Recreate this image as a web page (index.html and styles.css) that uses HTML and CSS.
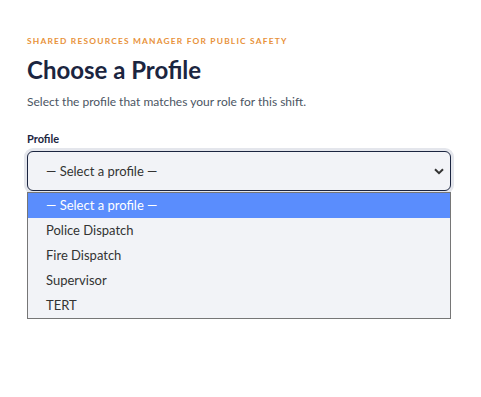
FILE: index.html
```html
<!DOCTYPE html>
<html lang="en">
<head>
  <meta charset="UTF-8" />
  <title>Choose a Profile</title>
  <link rel="stylesheet" href="styles.css">
</head>
<body>

  <div class="page">
    <p class="eyebrow">Shared Resources Manager for Public Safety</p>
    <h1>Choose a Profile</h1>
    <p class="lead">Select the profile that matches your role for this shift.</p>

    <label class="label">Profile</label>
    <div class="picker">
      <div class="select">
        <span>— Select a profile —</span>
        <svg class="caret" width="10" height="7" viewBox="0 0 10 7"><path d="M1 1.2 L5 5.2 L9 1.2" fill="none" stroke="#333" stroke-width="2"/></svg>
      </div>
      <ul class="options">
        <li class="active">— Select a profile —</li>
        <li>Police Dispatch</li>
        <li>Fire Dispatch</li>
        <li>Supervisor</li>
        <li>TERT</li>
      </ul>
    </div>
  </div>

</body>
</html>
```

FILE: styles.css
```css
body { margin: 0; font-family: Lato, "Noto Sans", sans-serif; background: #fff; color: #1b2540; }
.page { padding: 36px 30px 0 27px; }
.eyebrow {
  margin: 0;
  font-size: 8.4px;
  font-weight: bold;
  letter-spacing: 1.2px;
  text-transform: uppercase;
  color: #e8923a;
}
h1 { margin: 9px 0 0; font-size: 24px; line-height: 30px; color: #1b2540; }
.lead { margin: 9px 0 0; font-size: 12px; color: #4b5563; }
.label { display: block; margin-top: 23px; font-size: 11px; font-weight: bold; color: #1b2540; }
.picker { margin-top: 6px; }
.select {
  box-sizing: border-box;
  height: 40px;
  display: flex;
  align-items: center;
  justify-content: space-between;
  padding: 0 6px 0 18px;
  background: #f2f3f7;
  border: 1px solid #1b2540;
  border-radius: 6px;
  box-shadow: 0 0 0 3px #e4e6ec;
  font-size: 13px;
  color: #333;
}
.caret { display: block; }
.options {
  list-style: none;
  margin: 1px 0 0;
  padding: 0;
  background: #f2f3f7;
  border: 1px solid #767676;
  font-size: 13px;
  color: #333;
}
.options li { height: 25px; line-height: 25px; padding-left: 18px; }
.options li.active { background: #5a8dfd; color: #fff; }
```
